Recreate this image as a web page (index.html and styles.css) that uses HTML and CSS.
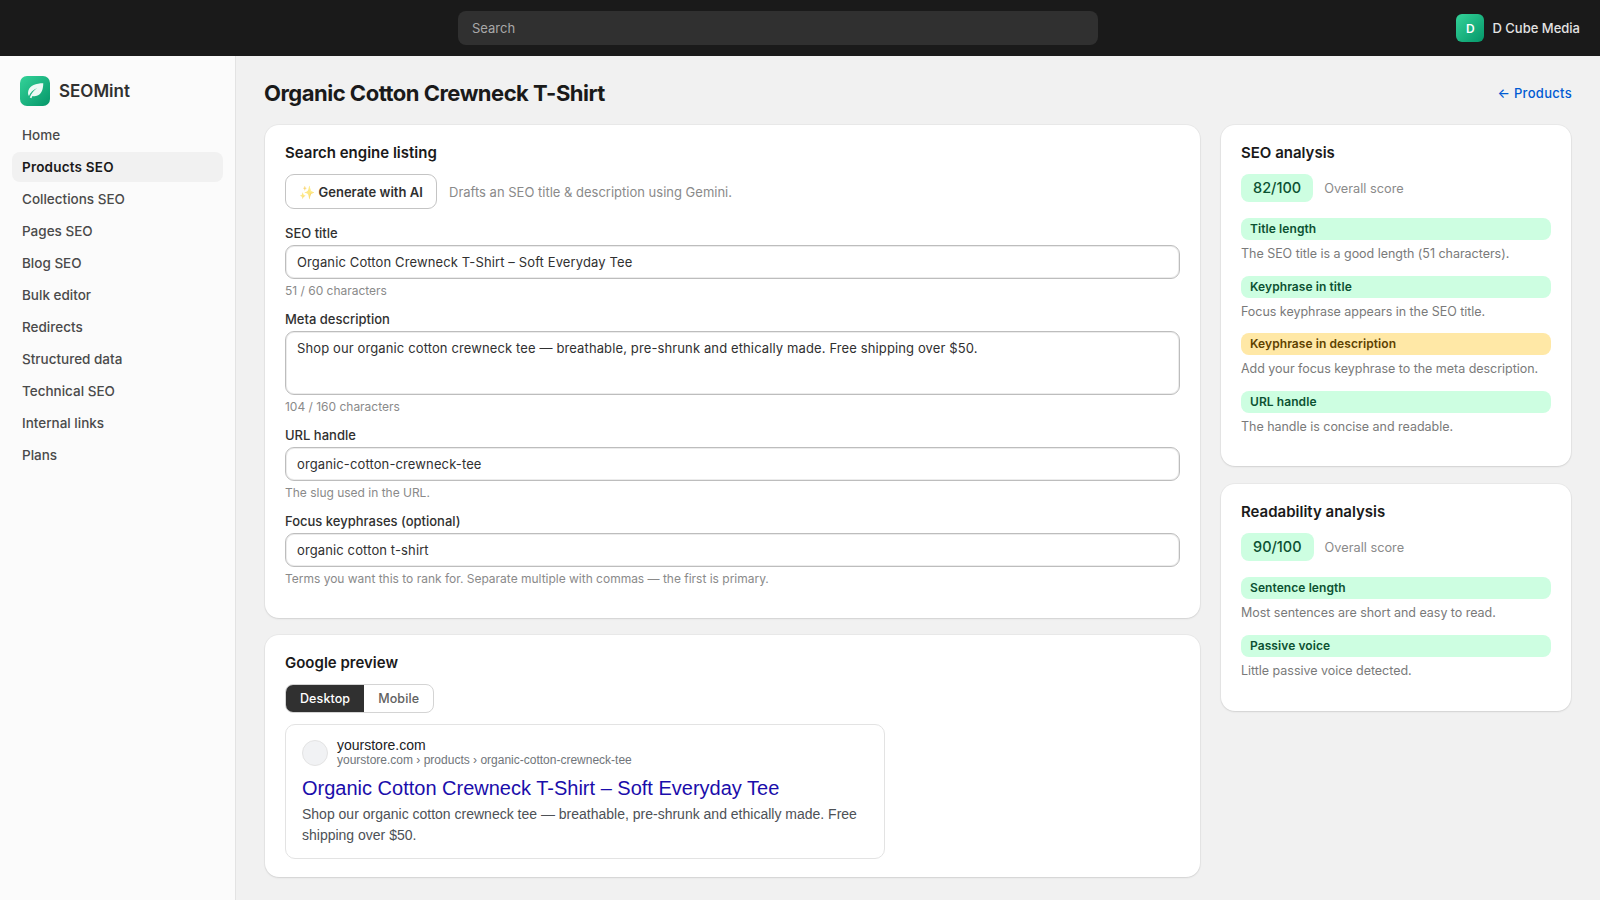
FILE: index.html
```html
<!DOCTYPE html>
<html lang="en">
<head>
  <meta charset="UTF-8">
  <meta name="viewport" content="width=device-width, initial-scale=1.0">
  <title>SEOMint</title>
  <link rel="stylesheet" href="styles.css">
</head>
<body>
  <header class="topbar">
    <div class="topbar-search">Search</div>
    <div class="topbar-account">
      <span class="account-badge">D</span>
      <span class="account-name">D Cube Media</span>
    </div>
  </header>

  <div class="layout">
    <aside class="sidebar">
      <div class="brand">
        <span class="brand-logo">
          <svg width="22" height="22" viewBox="0 0 24 24"><path d="M21 3.5C13 3.5 6.5 6 4.8 11.5c-.8 2.6-.3 4.6.6 5.9C7 13.600 10 10.600 14.500 8.800c-3.600 2.400-6.400 5.600-8.200 10.200l1.800.9c.4-1 .8-1.800 1.200-2.500 1.200.5 3 .6 4.800-.1C19.500 15.500 21 9.500 21 3.500z" fill="#fff" fill-opacity="0.92"/></svg>
        </span>
        <span class="brand-name">SEOMint</span>
      </div>
      <nav class="nav">
        <a class="nav-item">Home</a>
        <a class="nav-item active">Products SEO</a>
        <a class="nav-item">Collections SEO</a>
        <a class="nav-item">Pages SEO</a>
        <a class="nav-item">Blog SEO</a>
        <a class="nav-item">Bulk editor</a>
        <a class="nav-item">Redirects</a>
        <a class="nav-item">Structured data</a>
        <a class="nav-item">Technical SEO</a>
        <a class="nav-item">Internal links</a>
        <a class="nav-item">Plans</a>
      </nav>
    </aside>

    <main class="main">
      <div class="page-head">
        <h1 class="page-title">Organic Cotton Crewneck T-Shirt</h1>
        <a class="back-link">← Products</a>
      </div>

      <div class="columns">
        <div class="col-left">
          <section class="card">
            <h2 class="card-title">Search engine listing</h2>
            <div class="ai-row">
              <button class="ai-btn"><span class="sparkle">✨</span> Generate with AI</button>
              <span class="ai-note">Drafts an SEO title &amp; description using Gemini.</span>
            </div>

            <label class="field-label">SEO title</label>
            <div class="input">Organic Cotton Crewneck T-Shirt – Soft Everyday Tee</div>
            <p class="hint">51 / 60 characters</p>

            <label class="field-label">Meta description</label>
            <div class="input textarea">Shop our organic cotton crewneck tee — breathable, pre-shrunk and ethically made. Free shipping over $50.</div>
            <p class="hint">104 / 160 characters</p>

            <label class="field-label">URL handle</label>
            <div class="input">organic-cotton-crewneck-tee</div>
            <p class="hint">The slug used in the URL.</p>

            <label class="field-label">Focus keyphrases (optional)</label>
            <div class="input">organic cotton t-shirt</div>
            <p class="hint">Terms you want this to rank for. Separate multiple with commas — the first is primary.</p>
          </section>

          <section class="card preview-card">
            <h2 class="card-title">Google preview</h2>
            <div class="toggle">
              <span class="toggle-item on">Desktop</span>
              <span class="toggle-item">Mobile</span>
            </div>
            <div class="serp">
              <div class="serp-head">
                <span class="serp-icon"></span>
                <div>
                  <div class="serp-site">yourstore.com</div>
                  <div class="serp-path">yourstore.com › products › organic-cotton-crewneck-tee</div>
                </div>
              </div>
              <div class="serp-title">Organic Cotton Crewneck T-Shirt – Soft Everyday Tee</div>
              <div class="serp-desc">Shop our organic cotton crewneck tee — breathable, pre-shrunk and ethically made. Free shipping over $50.</div>
            </div>
          </section>
        </div>

        <div class="col-right">
          <section class="card">
            <h2 class="card-title">SEO analysis</h2>
            <div class="score-row">
              <span class="score">82/100</span>
              <span class="score-label">Overall score</span>
            </div>
            <div class="check good">Title length</div>
            <p class="check-text">The SEO title is a good length (51 characters).</p>
            <div class="check good">Keyphrase in title</div>
            <p class="check-text">Focus keyphrase appears in the SEO title.</p>
            <div class="check warn">Keyphrase in description</div>
            <p class="check-text">Add your focus keyphrase to the meta description.</p>
            <div class="check good">URL handle</div>
            <p class="check-text">The handle is concise and readable.</p>
          </section>

          <section class="card">
            <h2 class="card-title">Readability analysis</h2>
            <div class="score-row">
              <span class="score">90/100</span>
              <span class="score-label">Overall score</span>
            </div>
            <div class="check good">Sentence length</div>
            <p class="check-text">Most sentences are short and easy to read.</p>
            <div class="check good">Passive voice</div>
            <p class="check-text">Little passive voice detected.</p>
          </section>
        </div>
      </div>
    </main>
  </div>
</body>
</html>
```

FILE: styles.css
```css
* {
  box-sizing: border-box;
}

body {
  margin: 0;
  height: 900px;
  overflow: hidden;
  font-family: 'Inter', sans-serif;
  font-size: 13px;
  color: #303030;
  background-color: #f1f1f1;
}

.topbar {
  height: 56px;
  background-color: #1a1a1a;
  display: flex;
  align-items: center;
  justify-content: space-between;
  padding: 0 20px 0 458px;
}

.topbar-search {
  width: 640px;
  height: 34px;
  background-color: #303030;
  border-radius: 8px;
  padding: 0 14px;
  line-height: 34px;
  color: #a8a8a8;
}

.topbar-account {
  display: flex;
  align-items: center;
  gap: 8px;
}

.account-badge {
  width: 28px;
  height: 28px;
  border-radius: 6px;
  background: linear-gradient(135deg, #34d399, #059669);
  color: white;
  font-size: 12px;
  font-weight: 600;
  display: flex;
  align-items: center;
  justify-content: center;
}

.account-name {
  color: #e3e3e3;
  font-weight: 500;
}

.layout {
  display: flex;
  height: 844px;
}

.sidebar {
  width: 236px;
  flex-shrink: 0;
  background-color: #fbfbfb;
  border-right: 1px solid #e3e3e3;
  padding: 20px 12px;
}

.brand {
  display: flex;
  align-items: center;
  gap: 9px;
  height: 30px;
  padding-left: 8px;
  margin-bottom: 14px;
}

.brand-logo {
  width: 30px;
  height: 30px;
  border-radius: 7px;
  background: linear-gradient(135deg, #34d399, #059669);
  display: flex;
  align-items: center;
  justify-content: center;
}

.brand-name {
  font-size: 17px;
  line-height: 32px;
  font-weight: 600;
  color: #303030;
}

.nav {
  display: flex;
  flex-direction: column;
  gap: 2px;
}

.nav-item {
  height: 30px;
  line-height: 30px;
  width: 211px;
  padding-left: 10px;
  border-radius: 8px;
  font-size: 13.5px;
  color: #4a4a4a;
  font-weight: 450;
}

.nav-item.active {
  background-color: #f1f1f1;
  color: #1a1a1a;
  font-weight: 600;
  letter-spacing: 0.2px;
}

.main {
  flex: 1;
  padding: 0 28px;
}

.page-head {
  display: flex;
  align-items: center;
  justify-content: space-between;
  height: 69px;
  padding-top: 4px;
}

.page-title {
  margin: 0;
  font-size: 22px;
  font-weight: 700;
  color: #1a1a1a;
  letter-spacing: -0.5px;
}

.back-link {
  color: #005bd3;
  font-weight: 500;
  letter-spacing: 0.3px;
}

.columns {
  display: flex;
  gap: 21px;
  align-items: flex-start;
  padding-left: 1px;
}

.col-left {
  width: 935px;
  display: flex;
  flex-direction: column;
  gap: 17px;
}

.col-right {
  width: 350px;
  display: flex;
  flex-direction: column;
  gap: 18px;
}

.card {
  background-color: white;
  border-radius: 14px;
  padding: 18px 20px 20px;
  box-shadow: 0 1px 2px rgba(0, 0, 0, 0.1), 0 0 0 1px rgba(0, 0, 0, 0.03);
}

.col-right .card {
  padding-bottom: 18px;
}

.card-title {
  margin: 0 0 11px;
  font-size: 15px;
  line-height: 20px;
  font-weight: 600;
  color: #1a1a1a;
}

.ai-row {
  display: flex;
  align-items: center;
  gap: 12px;
  margin-bottom: 15px;
}

.ai-btn {
  height: 35px;
  width: 152px;
  padding: 0;
  background-color: white;
  border: 1px solid #c4c4c4;
  border-radius: 9px;
  font-family: inherit;
  font-size: 13px;
  font-weight: 600;
  color: #303030;
}

.sparkle {
  opacity: 0.6;
}

.ai-note {
  color: #8a8a8a;
}

.field-label {
  display: block;
  line-height: 18px;
  margin-bottom: 3px;
  font-weight: 500;
  color: #303030;
}

.input {
  height: 34px;
  line-height: 32px;
  padding: 0 11px;
  border: 1px solid #bdbdbd;
  border-radius: 9px;
  background-color: white;
  box-shadow: inset 0 0 0 1px #ececec;
  color: #303030;
  letter-spacing: 0.12px;
}

.textarea {
  height: 64px;
  line-height: 32px;
}

.hint {
  margin: 3px 0 10px;
  font-size: 12px;
  line-height: 18px;
  color: #8a8a8a;
  letter-spacing: -0.01px;
}

.toggle {
  display: inline-flex;
  height: 29px;
  border: 1px solid #d4d4d4;
  border-radius: 8px;
  overflow: hidden;
  margin-bottom: 11px;
}

.toggle-item {
  padding: 0 14px;
  line-height: 27px;
  font-size: 12.500px;
  font-weight: 500;
  color: #616161;
  letter-spacing: 0.1px;
}

.toggle-item.on {
  background-color: #303030;
  color: white;
}

.preview-card {
  padding-bottom: 18px;
}

.serp {
  width: 600px;
  border: 1px solid #e3e3e3;
  border-radius: 10px;
  padding: 12px 16px 12px;
}

.serp-head {
  display: flex;
  align-items: center;
  gap: 9px;
}

.serp-icon {
  width: 26px;
  height: 26px;
  border-radius: 50%;
  background-color: #f1f2f4;
  border: 1px solid #e3e3e3;
}

.serp-site {
  font-family: 'Liberation Sans', sans-serif;
  font-size: 14px;
  line-height: 16px;
  color: #202124;
}

.serp-path {
  font-family: 'Liberation Sans', sans-serif;
  font-size: 12px;
  line-height: 15px;
  color: #70757a;
}

.serp-title {
  margin-top: 6px;
  font-family: 'Liberation Sans', sans-serif;
  font-size: 20px;
  line-height: 28px;
  color: #1a0dab;
}

.serp-desc {
  margin-top: 2px;
  font-family: 'Liberation Sans', sans-serif;
  font-size: 14px;
  line-height: 21px;
  color: #4d5156;
}

.score-row {
  display: flex;
  align-items: center;
  gap: 11px;
  margin-bottom: 16px;
}

.score {
  height: 28px;
  line-height: 28px;
  padding: 0 12px;
  border-radius: 8px;
  background-color: #cdfee1;
  color: #0c5132;
  font-size: 14.500px;
  font-weight: 500;
}

.score-label {
  font-size: 12.750px;
  color: #8a8a8a;
}

.check {
  height: 22px;
  line-height: 22px;
  padding: 0 9px;
  border-radius: 8px;
  font-size: 12px;
  font-weight: 600;
  letter-spacing: 0.08px;
}

.good {
  background-color: #cdfee1;
  color: #0c5132;
}

.warn {
  background-color: #ffe8a6;
  color: #5e4200;
}

.check-text {
  margin: 5px 0 12.600px;
  font-size: 12.500px;
  line-height: 18px;
  color: #7a7a7a;
  letter-spacing: -0.03px;
}
```
